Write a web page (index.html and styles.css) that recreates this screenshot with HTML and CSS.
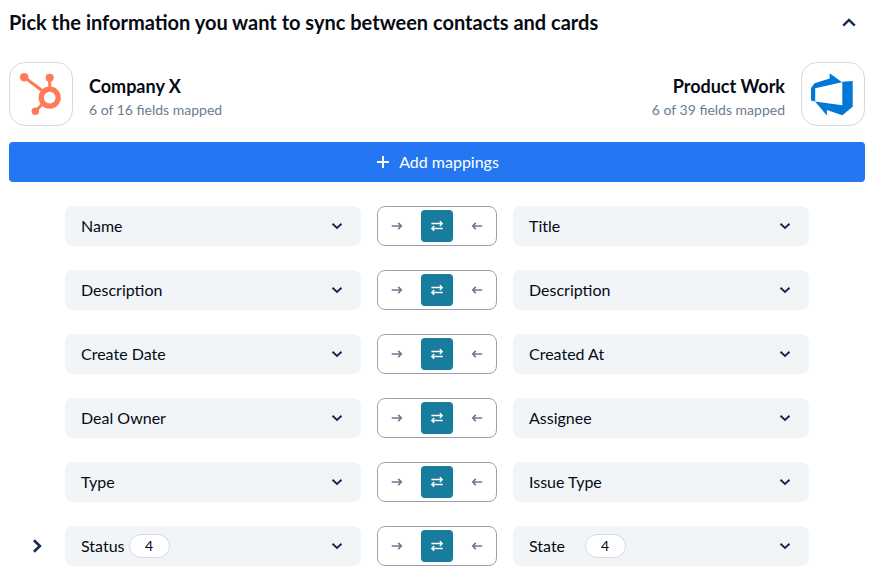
FILE: index.html
```html
<!DOCTYPE html>
<html lang="en">
<head>
    <meta charset="UTF-8">
    <meta name="viewport" content="width=device-width, initial-scale=1.0">
    <title>Field mappings</title>
    <link rel="stylesheet" href="styles.css">
</head>
<body>
    <svg class="sprite" aria-hidden="true">
        <symbol id="chevron" viewBox="0 0 12 12"><path d="M1.5 3.8 6 8l4.5-4.2"/></symbol>
        <symbol id="arrow" viewBox="0 0 12 12"><path d="M.7 6h9.4M7.2 2.8 10.3 6 7.2 9.2"/></symbol>
        <symbol id="swap" viewBox="0 0 14 12"><path d="M1.4 3.6h10.4M9.9 1.3l2.2 2.3-2.2 2.3M12.8 8.4H2.2M4.1 6.1 1.9 8.4l2.2 2.3"/></symbol>
    </svg>

    <div class="panel">
        <div class="panel-header">
            <h1>Pick the information you want to sync between contacts and cards</h1>
            <svg class="collapse" viewBox="0 0 16 16"><path d="M2.2 10.7 8 4.9l5.8 5.8"/></svg>
        </div>

        <div class="tools">
            <div class="tool">
                <div class="logo">
                    <svg viewBox="0 0 62 62">
                        <g fill="#ff7a59" stroke="#ff7a59">
                            <circle cx="14.2" cy="14.3" r="4.3" stroke="none"/>
                            <circle cx="39.7" cy="14.8" r="4" stroke="none"/>
                            <circle cx="25.3" cy="48.3" r="3.7" stroke="none"/>
                            <path d="M14 14l18 13.5M39.7 15v12M25.3 48.3l8-8" stroke-width="3"/>
                            <circle cx="39.7" cy="34.6" r="8.5" fill="none" stroke-width="5.2"/>
                        </g>
                    </svg>
                </div>
                <div class="tool-text">
                    <h2>Company X</h2>
                    <p>6 of 16 fields mapped</p>
                </div>
            </div>
            <div class="tool tool-right">
                <div class="tool-text">
                    <h2>Product Work</h2>
                    <p>6 of 39 fields mapped</p>
                </div>
                <div class="logo">
                    <svg viewBox="0 0 62 62">
                        <path fill="#0078d7" d="M50.7 18v25.8l-10.4 8.5-15.4-5.2v5.3L13 38.4l27.3 3.8V18.8z"/>
                        <path fill="#0078d7" d="M40.1 19.3 27.7 10.2v5.2L12.6 20.3 9 25v12.5l4.2 1V25.2z"/>
                    </svg>
                </div>
            </div>
        </div>

        <button class="add-button">
            <svg viewBox="0 0 12 12"><path d="M6 0v12M0 6h12"/></svg>
            Add mappings
        </button>

        <div class="mappings">
            <div class="mapping">
                <div class="field">Name <svg class="chevron"><use href="#chevron"/></svg></div>
                <div class="direction">
                    <span><svg class="arrow"><use href="#arrow"/></svg></span>
                    <span class="active"><svg class="swap"><use href="#swap"/></svg></span>
                    <span><svg class="arrow back"><use href="#arrow"/></svg></span>
                </div>
                <div class="field">Title <svg class="chevron"><use href="#chevron"/></svg></div>
            </div>
            <div class="mapping">
                <div class="field">Description <svg class="chevron"><use href="#chevron"/></svg></div>
                <div class="direction">
                    <span><svg class="arrow"><use href="#arrow"/></svg></span>
                    <span class="active"><svg class="swap"><use href="#swap"/></svg></span>
                    <span><svg class="arrow back"><use href="#arrow"/></svg></span>
                </div>
                <div class="field">Description <svg class="chevron"><use href="#chevron"/></svg></div>
            </div>
            <div class="mapping">
                <div class="field">Create Date <svg class="chevron"><use href="#chevron"/></svg></div>
                <div class="direction">
                    <span><svg class="arrow"><use href="#arrow"/></svg></span>
                    <span class="active"><svg class="swap"><use href="#swap"/></svg></span>
                    <span><svg class="arrow back"><use href="#arrow"/></svg></span>
                </div>
                <div class="field">Created At <svg class="chevron"><use href="#chevron"/></svg></div>
            </div>
            <div class="mapping">
                <div class="field">Deal Owner <svg class="chevron"><use href="#chevron"/></svg></div>
                <div class="direction">
                    <span><svg class="arrow"><use href="#arrow"/></svg></span>
                    <span class="active"><svg class="swap"><use href="#swap"/></svg></span>
                    <span><svg class="arrow back"><use href="#arrow"/></svg></span>
                </div>
                <div class="field">Assignee <svg class="chevron"><use href="#chevron"/></svg></div>
            </div>
            <div class="mapping">
                <div class="field">Type <svg class="chevron"><use href="#chevron"/></svg></div>
                <div class="direction">
                    <span><svg class="arrow"><use href="#arrow"/></svg></span>
                    <span class="active"><svg class="swap"><use href="#swap"/></svg></span>
                    <span><svg class="arrow back"><use href="#arrow"/></svg></span>
                </div>
                <div class="field">Issue Type <svg class="chevron"><use href="#chevron"/></svg></div>
            </div>
            <div class="mapping">
                <svg class="expand" viewBox="0 0 16 16"><path d="M4.9 2.2 10.9 8l-6 5.8"/></svg>
                <div class="field"><span class="label">Status</span><span class="count">4</span> <svg class="chevron"><use href="#chevron"/></svg></div>
                <div class="direction">
                    <span><svg class="arrow"><use href="#arrow"/></svg></span>
                    <span class="active"><svg class="swap"><use href="#swap"/></svg></span>
                    <span><svg class="arrow back"><use href="#arrow"/></svg></span>
                </div>
                <div class="field"><span class="label label-wide">State</span><span class="count">4</span> <svg class="chevron"><use href="#chevron"/></svg></div>
            </div>
        </div>
    </div>
</body>
</html>
```
FILE: styles.css
```css
* {
    box-sizing: border-box;
}

body {
    margin: 0;
    background: #fff;
    color: #060a14;
    font-family: Lato, sans-serif;
    font-size: 16px;
    line-height: 24px;
    overflow: hidden;
}

h1, h2, p {
    margin: 0;
}

svg {
    display: block;
    flex: none;
    fill: none;
}

.sprite {
    display: none;
}

.panel {
    padding: 7px 8px 0 9px;
}

.panel-header {
    display: flex;
    align-items: center;
    justify-content: space-between;
    height: 30px;
    padding-right: 8px;
}

h1 {
    font-size: 20px;
    font-weight: 700;
    line-height: 30px;
    white-space: nowrap;
}

.collapse {
    width: 16px;
    height: 16px;
    margin-top: 2px;
    stroke: #172b4d;
    stroke-width: 2.4;
}

.tools {
    display: flex;
    justify-content: space-between;
    margin-top: 25px;
}

.tool {
    display: flex;
    align-items: center;
    gap: 16px;
}

.tool-right {
    text-align: right;
}

.logo {
    width: 64px;
    height: 64px;
    border: 1px solid #d5d9e8;
    border-radius: 16px;
}

.logo svg {
    width: 62px;
    height: 62px;
}

.tool-text {
    padding-top: 8px;
}

h2 {
    font-size: 18px;
    font-weight: 700;
    line-height: 24px;
}

.tool-text p {
    color: #6b7c90;
    font-size: 14px;
    line-height: 24px;
}

.add-button {
    display: flex;
    align-items: center;
    justify-content: center;
    gap: 10px;
    width: 100%;
    height: 40px;
    margin-top: 16px;
    padding: 0 0 0 2px;
    border: 0;
    border-radius: 4px;
    background: #2476f2;
    color: #fff;
    font: inherit;
}

.add-button svg {
    width: 12px;
    height: 12px;
    stroke: #fff;
    stroke-width: 2;
}

.mappings {
    display: grid;
    gap: 24px;
    margin-top: 24px;
}

.mapping {
    display: grid;
    grid-template-columns: 40px 296px 120px 296px;
    column-gap: 16px;
    align-items: center;
    height: 40px;
}

.mapping .field:first-child {
    grid-column-start: 2;
}

.expand {
    width: 16px;
    height: 16px;
    margin-left: 20px;
    stroke: #172b4d;
    stroke-width: 2.6;
}

.field {
    display: flex;
    align-items: center;
    height: 40px;
    padding: 0 18px 0 16px;
    border-radius: 8px;
    background: #f1f5f8;
}

.chevron {
    width: 12px;
    height: 12px;
    margin-left: auto;
    stroke: #172b4d;
    stroke-width: 2;
}

.label {
    width: 48px;
}

.label-wide {
    width: 56px;
}

.count {
    width: 41px;
    height: 24px;
    padding-right: 1px;
    border: 1px solid #d5d9e8;
    border-radius: 12px;
    background: #fff;
    font-size: 14px;
    line-height: 22px;
    text-align: center;
}

.direction {
    display: flex;
    align-items: center;
    justify-content: space-between;
    height: 40px;
    padding: 0 3px;
    border: 1px solid #94a3b4;
    border-radius: 8px;
}

.direction span {
    display: flex;
    align-items: center;
    justify-content: center;
    width: 32px;
    height: 32px;
    border-radius: 4px;
}

.direction .active {
    background: #187d9c;
}

.arrow {
    width: 12px;
    height: 12px;
    stroke: #6b7c90;
    stroke-width: 1.7;
}

.back {
    transform: scaleX(-1);
}

.swap {
    width: 14px;
    height: 12px;
    stroke: #fff;
    stroke-width: 1.5;
}
```
